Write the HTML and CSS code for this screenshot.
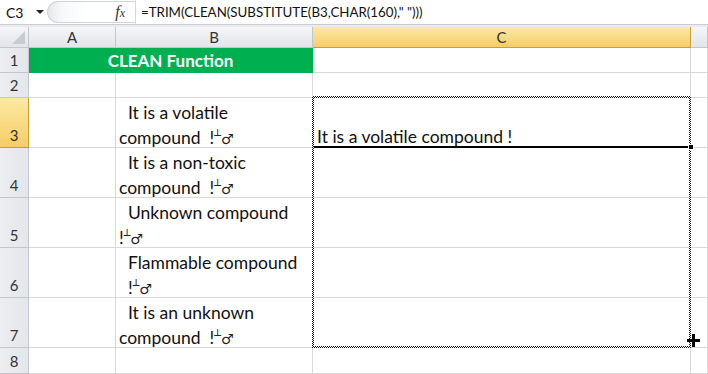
FILE: index.html
```html
<!DOCTYPE html>
<html lang="en">
<head>
  <meta charset="UTF-8" />
  <title>CLEAN Function</title>
  <link rel="stylesheet" href="styles.css">
</head>
<body>
  <div class="formula-bar">
    <div class="name-box">C3<span class="caret"></span></div>
    <div class="splitter"><span class="fx">f<small>x</small></span></div>
    <div class="formula">=TRIM(CLEAN(SUBSTITUTE(B3,CHAR(160),"&nbsp;")))</div>
  </div>
  <div class="band"></div>

  <div class="sheet">
    <!-- column headers -->
    <div class="hd corner"><span class="tri"></span></div>
    <div class="hd col">A</div>
    <div class="hd col">B</div>
    <div class="hd col sel">C</div>
    <div class="hd col"></div>

    <!-- row 1 -->
    <div class="hd row">1</div>
    <div class="cell title">CLEAN Function</div>
    <div class="cell"></div>
    <div class="cell"></div>

    <!-- row 2 -->
    <div class="hd row">2</div>
    <div class="cell"></div>
    <div class="cell"></div>
    <div class="cell"></div>
    <div class="cell"></div>

    <!-- row 3 -->
    <div class="hd row sel">3</div>
    <div class="cell"></div>
    <div class="cell txt"><div>&nbsp;&nbsp;It is a volatile<br>compound &nbsp;!<span class="ctl"><sup>┴</sup>♂</span></div></div>
    <div class="cell txt active">
      <div>It is a volatile compound !</div>
      <span class="handle"></span>
      <!-- copy range C3:C7 -->
      <span class="ants"></span>
    </div>
    <div class="cell"></div>

    <!-- row 4 -->
    <div class="hd row">4</div>
    <div class="cell"></div>
    <div class="cell txt"><div>&nbsp;&nbsp;It is a non-toxic<br>compound &nbsp;!<span class="ctl"><sup>┴</sup>♂</span></div></div>
    <div class="cell"></div>
    <div class="cell"></div>

    <!-- row 5 -->
    <div class="hd row">5</div>
    <div class="cell"></div>
    <div class="cell txt"><div>&nbsp;&nbsp;Unknown compound<br>!<span class="ctl"><sup>┴</sup>♂</span></div></div>
    <div class="cell"></div>
    <div class="cell"></div>

    <!-- row 6 -->
    <div class="hd row">6</div>
    <div class="cell"></div>
    <div class="cell txt"><div>&nbsp;&nbsp;Flammable compound<br>&nbsp;&nbsp;!<span class="ctl"><sup>┴</sup>♂</span></div></div>
    <div class="cell"></div>
    <div class="cell"></div>

    <!-- row 7 -->
    <div class="hd row">7</div>
    <div class="cell"></div>
    <div class="cell txt"><div>&nbsp;&nbsp;It is an unknown<br>compound &nbsp;!<span class="ctl"><sup>┴</sup>♂</span></div></div>
    <div class="cell"></div>
    <div class="cell"></div>

    <!-- row 8 -->
    <div class="hd row">8</div>
    <div class="cell"></div>
    <div class="cell"></div>
    <div class="cell"></div>
    <div class="cell"></div>

    <div class="cursor"></div>
  </div>
</body>
</html>
```

FILE: styles.css
```css
* {
  margin: 0;
  padding: 0;
  box-sizing: border-box;
}

body {
  width: 708px;
  height: 374px;
  overflow: hidden;
  background: #fff;
  color: #000;
  font-family: Lato, "Liberation Sans", sans-serif;
}

/* formula bar */
.formula-bar {
  display: flex;
  height: 25px;
  border-bottom: 1px solid #c9cdd3;
  background: #fff;
}

.name-box {
  width: 47px;
  display: flex;
  align-items: center;
  padding-left: 6px;
  font-size: 14px;
  color: #111;
}

.caret {
  margin-left: 13px;
  border-left: 4px solid transparent;
  border-right: 4px solid transparent;
  border-top: 4px solid #222;
}

.splitter {
  width: 88px;
  margin: 1px 0;
  border: 1px solid #d0d3d8;
  border-right: none;
  border-radius: 12px 0 0 12px;
  background: linear-gradient(90deg, #e6e8eb 0, #f7f8f9 14px, #fff 40px);
  display: flex;
  justify-content: flex-end;
  align-items: center;
  padding-right: 10px;
}

.fx {
  font-family: "Liberation Serif", serif;
  font-style: italic;
  font-size: 16px;
  color: #333;
}

.fx small {
  font-size: 12px;
}

.formula {
  flex: 1;
  display: flex;
  align-items: center;
  padding-left: 5px;
  border-left: 1px solid #d6d8dc;
  font-size: 13.3px;
  white-space: pre;
  color: #111;
}

.band {
  height: 2px;
  background: #e9ebee;
}

/* grid */
.sheet {
  position: relative;
  display: grid;
  grid-template-columns: 29px 87px 197px 378px 17px;
  grid-template-rows: 21px 25px 25px repeat(5, 50px) 26px;
}

.cell {
  border-right: 1px solid #d9d9d9;
  border-bottom: 1px solid #d9d9d9;
}

.hd {
  display: flex;
  justify-content: center;
  background: linear-gradient(#f4f5f7, #e2e5e9);
  border-right: 1px solid #c3c7cd;
  border-bottom: 1px solid #c3c7cd;
  color: #333;
  font-size: 15px;
}

.hd.col {
  align-items: center;
}

.hd.row {
  align-items: flex-end;
  padding-bottom: 3px;
  background: linear-gradient(90deg, #eceef1, #e3e6ea);
}

.hd.sel {
  background: linear-gradient(#fce9a4, #f6cd66);
  border-color: #c29d46;
}

.corner {
  position: relative;
}

.tri {
  position: absolute;
  right: 3px;
  bottom: 3px;
  border-left: 13px solid transparent;
  border-bottom: 13px solid #c8ccd2;
}

.title {
  grid-column: 2 / span 2;
  background: #00b050;
  border-color: #00b050;
  color: #fff;
  font-weight: bold;
  font-size: 17px;
  display: flex;
  align-items: center;
  justify-content: center;
}

.txt {
  display: flex;
  flex-direction: column;
  justify-content: flex-end;
  padding-left: 3px;
  font-size: 17.5px;
  line-height: 25px;
  white-space: nowrap;
  color: #111;
}

.txt > div {
  margin-bottom: -3px;
}

.ctl {
  font-family: "DejaVu Sans", sans-serif;
  font-size: 14px;
  line-height: 1;
  color: #222;
}

.ctl sup {
  font-size: 11px;
  line-height: 1;
  vertical-align: 5px;
}

.active {
  position: relative;
  border-bottom: 2px solid #000;
  padding-left: 4px;
}

.active > div {
  margin-bottom: -3px;
}

.handle {
  position: absolute;
  right: -4px;
  bottom: -4px;
  width: 6px;
  height: 6px;
  background: #000;
  border: 1px solid #fff;
  z-index: 3;
}

.ants {
  position: absolute;
  left: -1px;
  right: -1px;
  top: -2px;
  height: 252px;
  padding: 2px;
  z-index: 2;
  background: repeating-conic-gradient(#111 0 25%, #fff 0 50%) 0 0 / 2px 2px;
  -webkit-mask: linear-gradient(#000 0 0) content-box, linear-gradient(#000 0 0);
  -webkit-mask-composite: xor;
  mask-composite: exclude;
}

.cursor {
  position: absolute;
  left: 687px;
  top: 307px;
  width: 13px;
  height: 13px;
  z-index: 3;
  background:
    linear-gradient(#000 0 0) center / 13px 3px no-repeat,
    linear-gradient(#000 0 0) center / 3px 13px no-repeat;
}
```
